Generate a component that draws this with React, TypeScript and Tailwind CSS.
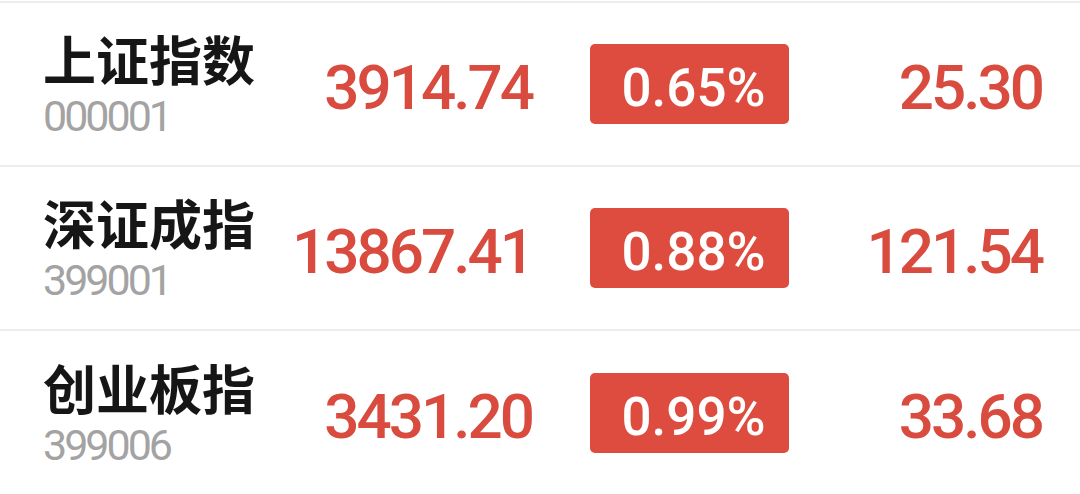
import React from "react";

interface IndexRow {
  name: string;
  code: string;
  price: string;
  pct: string;
  change: string;
}

const ROWS: IndexRow[] = [
  { name: "上证指数", code: "000001", price: "3914.74", pct: "0.65%", change: "25.30" },
  { name: "深证成指", code: "399001", price: "13867.41", pct: "0.88%", change: "121.54" },
  { name: "创业板指", code: "399006", price: "3431.20", pct: "0.99%", change: "33.68" },
];

const NUM_FONT = { fontFamily: "Roboto, 'Liberation Sans', sans-serif" };
const CJK_FONT = { fontFamily: "'Noto Sans CJK SC', 'Noto Sans', sans-serif" };

export default function App() {
  return (
    <div className="w-[1080px] h-[494px] bg-white overflow-hidden pt-[1px]">
      <div className="border-t-2 border-[#ececec]">
        {ROWS.map((r) => (
          <div key={r.code} className="flex items-center h-[164px] border-b-2 border-[#ececec] last:border-b-0">
            <div className="w-[290px] pl-[43px] flex flex-col">
              <div className="text-[53px] leading-[56px] font-bold text-[#161616]" style={CJK_FONT}>
                {r.name}
              </div>
              <div className="text-[43px] leading-none mt-[9px] text-[#a3a3a3] tracking-[-3px]" style={NUM_FONT}>
                {r.code}
              </div>
            </div>
            <div
              className="w-[242px] text-right text-[62px] leading-none font-medium text-[#d84b3e] tracking-[-3px] mt-[8px]"
              style={NUM_FONT}
            >
              {r.price}
            </div>
            <div className="ml-[58px] w-[199px] h-[80px] rounded-[5px] bg-[#dd4c3f] flex items-center justify-center pl-[8px] pt-[8px]">
              <span className="text-[53px] leading-none font-medium text-white" style={NUM_FONT}>
                {r.pct}
              </span>
            </div>
            <div
              className="flex-1 text-right pr-[38px] text-[62px] leading-none font-medium text-[#d84b3e] tracking-[-3px] mt-[8px]"
              style={NUM_FONT}
            >
              {r.change}
            </div>
          </div>
        ))}
      </div>
    </div>
  );
}
